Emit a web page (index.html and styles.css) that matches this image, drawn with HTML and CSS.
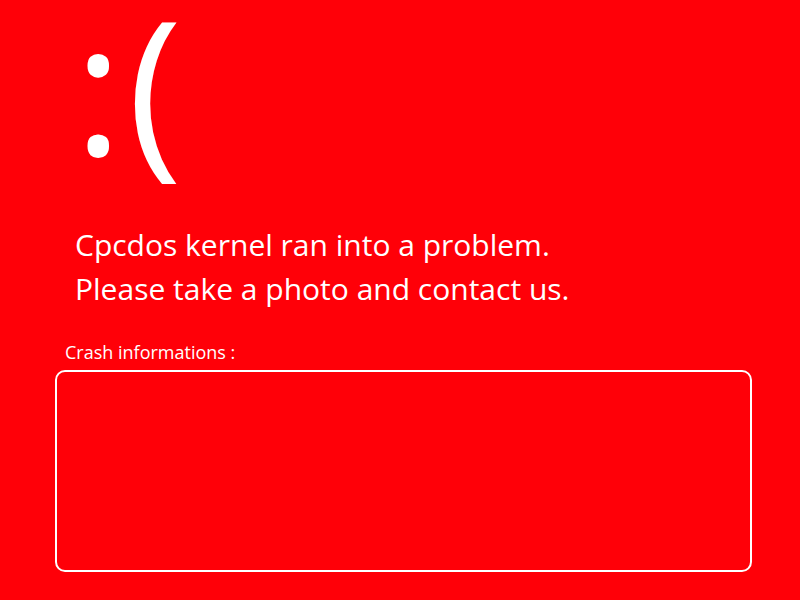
FILE: index.html
```html
<!DOCTYPE html>
<html>
<head>
<meta charset="utf-8">
<link rel="stylesheet" href="styles.css">
</head>
<body>
<div class="screen">
  <div class="face">:(</div>
  <div class="message">
    <p>Cpcdos kernel ran into a problem.</p>
    <p>Please take a photo and contact us.</p>
  </div>
  <div class="crash-label">Crash informations :</div>
  <div class="crash-box"></div>
</div>
</body>
</html>
```
FILE: styles.css
```css
html, body {
  margin: 0;
  padding: 0;
  background: #ff0008;
}
.screen {
  width: 800px;
  height: 600px;
  box-sizing: border-box;
  padding: 0 0 0 55px;
  color: #ffffff;
  font-family: "Open Sans", "Noto Sans", sans-serif;
  display: flex;
  flex-direction: column;
}
.face {
  font-size: 185px;
  line-height: 170px;
  height: 195px;
  margin: -2px 0 0 19px;
  letter-spacing: 5px;
  font-weight: 400;
}
.message {
  margin: 30.4px 0 0 20px;
  font-size: 30px;
  line-height: 44px;
}
.message p {
  margin: 0;
}
.crash-label {
  margin: 30.6px 0 0 10px;
  font-size: 18px;
  line-height: 20px;
}
.crash-box {
  margin-top: 8px;
  width: 697px;
  height: 202px;
  box-sizing: border-box;
  border: 2px solid #ffffff;
  border-radius: 10px;
}
```
